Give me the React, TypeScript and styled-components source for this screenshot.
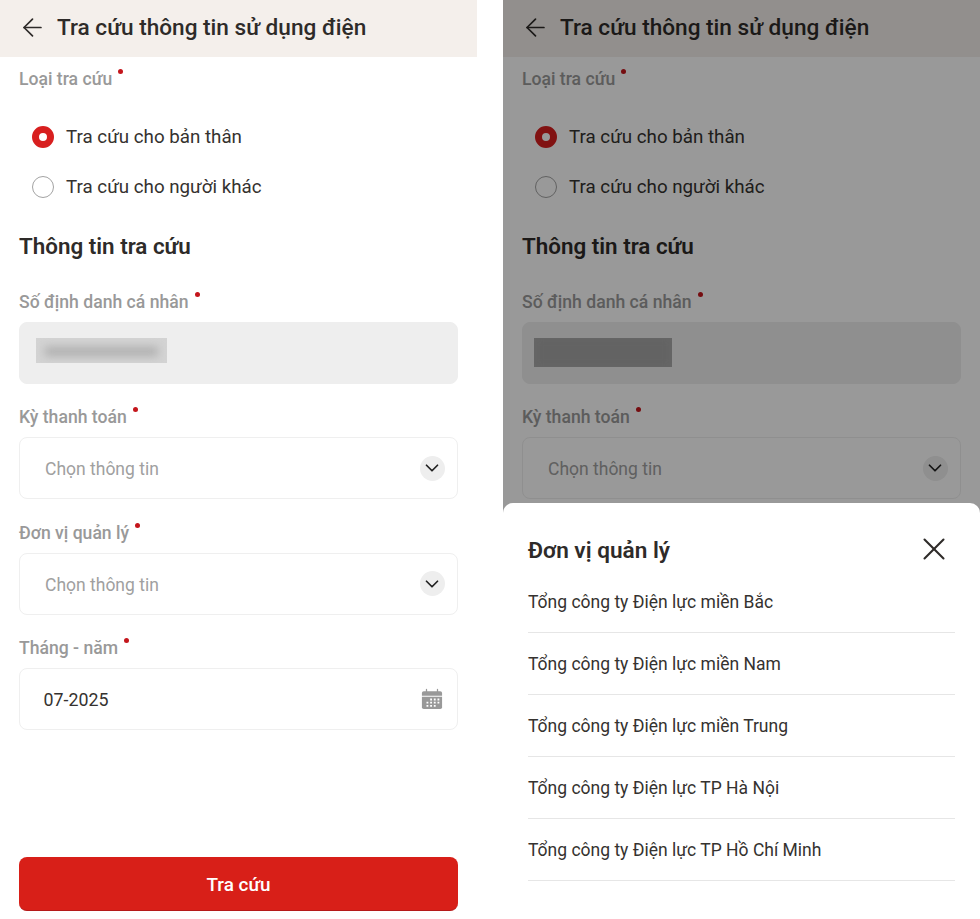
import React from "react";
import styled, { createGlobalStyle } from "styled-components";
import { ArrowLeft, ChevronDown, X } from "lucide-react";

const GlobalStyle = createGlobalStyle`
    html, body {
        margin: 0;
        padding: 0;
        background: #fff;
    }
    body {
        font-family: Roboto, "Liberation Sans", sans-serif;
    }
`;

const Page = styled.div`
    display: flex;
    justify-content: space-between;
    width: 980px;
    height: 919px;
    overflow: hidden;
`;

const Phone = styled.div`
    position: relative;
    display: flex;
    flex-direction: column;
    width: 477px;
    height: 919px;
    overflow: hidden;
    background: #fff;
`;

const Header = styled.header`
    display: flex;
    align-items: center;
    gap: 10px;
    height: 57px;
    padding: 0 0 2px 18px;
    box-sizing: border-box;
    flex: none;
    background: #f4efeb;
    color: #2e2b29;
`;

const Title = styled.h1`
    margin: 0;
    font-size: 22.6px;
    font-weight: 500;
    line-height: 28px;
`;

const Body = styled.main`
    display: flex;
    flex: 1;
    flex-direction: column;
    padding: 12px 19px 8px;
`;

const Label = styled.div`
    position: relative;
    width: max-content;
    padding-right: 11px;
    font-size: 17.6px;
    font-weight: 500;
    line-height: 20px;
    color: #999;

    &::after {
        content: "";
        position: absolute;
        top: 0;
        right: 0;
        width: 5px;
        height: 5px;
        border-radius: 50%;
        background: #c4161c;
    }
`;

const RadioGroup = styled.div`
    display: flex;
    flex-direction: column;
    gap: 28px;
    margin-top: 37px;
    padding-left: 12.5px;
`;

const RadioRow = styled.div`
    display: flex;
    align-items: center;
    gap: 12.5px;
    height: 22px;
    font-size: 18.75px;
    color: #35322f;
`;

const RadioMark = styled.span<{ $checked?: boolean }>`
    width: 22px;
    height: 22px;
    box-sizing: border-box;
    flex: none;
    border-radius: 50%;
    border: ${(p) => (p.$checked ? "7.5px solid #d81f1f" : "1.5px solid #a3a3a3")};
    background: #fff;
`;

const SectionTitle = styled.h2`
    margin: 34px 0 0;
    font-size: 22.4px;
    font-weight: 600;
    line-height: 28px;
    color: #2e2b29;
`;

const Field = styled.div<{ $gap: number }>`
    display: flex;
    flex-direction: column;
    gap: 10px;
    margin-top: ${(p) => p.$gap}px;
`;

const InputBox = styled.div<{ $disabled?: boolean }>`
    display: flex;
    align-items: center;
    justify-content: space-between;
    height: 62px;
    box-sizing: border-box;
    padding: 0 12.2px 0 25px;
    border-radius: 8px;
    font-size: 17.5px;
    color: #a0a0a0;
    background: ${(p) => (p.$disabled ? "#eeeeee" : "#fff")};
    border: 1.5px solid ${(p) => (p.$disabled ? "#eeeeee" : "#efefef")};
`;

const Placeholder = styled.span`
    margin-top: 1.5px;
`;

const DateValue = styled.span`
    margin-left: -1.5px;
    font-size: 17.8px;
    color: #35322f;
`;

const Masked = styled.div<{ $solid?: boolean }>`
    position: relative;
    overflow: hidden;
    margin-left: ${(p) => (p.$solid ? "-14px" : "-9px")};
    margin-top: ${(p) => (p.$solid ? "-1px" : "-6px")};
    width: ${(p) => (p.$solid ? 138 : 131)}px;
    height: ${(p) => (p.$solid ? 29 : 25)}px;
    background: ${(p) => (p.$solid ? "#aeaeae" : "#d3d3d3")};

    &::after {
        content: "";
        position: absolute;
        inset: ${(p) => (p.$solid ? "-2px 0" : "9px 9px 7px")};
        background: ${(p) => (p.$solid ? "#a6a6a6" : "#aeaeae")};
        filter: blur(4px);
    }
`;

const ChevronCircle = styled.span`
    display: flex;
    align-items: center;
    justify-content: center;
    width: 25px;
    height: 25px;
    border-radius: 50%;
    background: #eeeeee;
    color: #222;
`;

const CalendarSlot = styled.span`
    display: flex;
    margin-right: 1.5px;
`;

const SubmitButton = styled.button`
    height: 54px;
    width: 100%;
    margin-top: auto;
    padding: 2px 0 0;
    border: none;
    border-bottom: 1px solid #b51a1a;
    border-radius: 8px;
    font-family: inherit;
    font-size: 18.9px;
    font-weight: 500;
    color: #fff;
    background: #d81f18;
`;

const Scrim = styled.div`
    position: absolute;
    inset: 0;
    background: rgba(0, 0, 0, 0.4);
`;

const Sheet = styled.section`
    position: absolute;
    left: 0;
    right: 0;
    bottom: 0;
    height: 416px;
    box-sizing: border-box;
    padding: 34px 25px 0;
    border-radius: 10px 10px 0 0;
    background: #fff;
`;

const SheetHead = styled.div`
    display: flex;
    align-items: center;
    justify-content: space-between;
    height: 28px;
    margin-bottom: 6px;
    color: #2e2b29;
`;

const SheetTitle = styled.h3`
    margin: 0;
    font-size: 22.6px;
    font-weight: 600;
    line-height: 28px;
`;

const CloseSlot = styled.span`
    display: flex;
    margin-right: 2px;
    margin-top: -4px;
`;

const SheetItem = styled.div`
    display: flex;
    align-items: center;
    height: 62px;
    box-sizing: border-box;
    border-bottom: 1px solid #e6e6e6;
    font-size: 17.5px;
    color: #35322f;
`;

function CalendarIcon() {
    return (
        <svg width="22" height="22" viewBox="0 0 24 24" fill="none">
            <path d="M3 3.5h18a2 2 0 0 1 2 2v3H1v-3a2 2 0 0 1 2-2z" fill="#999" />
            <path d="M6 1.5v3M18 1.5v3" stroke="#999" strokeWidth="1.4" strokeLinecap="round" />
            <path d="M1 9.5h22V21a2 2 0 0 1-2 2H3a2 2 0 0 1-2-2z" fill="#999" />
            <path
                d="M10 11.5h2v2h-2zM14 11.5h2v2h-2zM18 11.5h2v2h-2zM6 15h2v2H6zM10 15h2v2h-2zM14 15h2v2h-2zM18 15h2v2h-2zM6 18.5h2v2H6zM10 18.5h2v2h-2zM14 18.5h2v2h-2z"
                fill="#fff"
            />
        </svg>
    );
}

function SelectField({ label }: { label: string }) {
    return (
        <Field $gap={23.4}>
            <Label>{label}</Label>
            <InputBox>
                <Placeholder>Chọn thông tin</Placeholder>
                <ChevronCircle>
                    <ChevronDown size={22} strokeWidth={1.9} />
                </ChevronCircle>
            </InputBox>
        </Field>
    );
}

// covered: the bottom sheet is open, so the lower fields are not drawn
function LookupForm({ covered }: { covered?: boolean }) {
    return (
        <>
            <Header>
                <ArrowLeft size={29} strokeWidth={1.4} />
                <Title>Tra cứu thông tin sử dụng điện</Title>
            </Header>
            <Body>
                <Label>Loại tra cứu</Label>
                <RadioGroup>
                    <RadioRow>
                        <RadioMark $checked />
                        Tra cứu cho bản thân
                    </RadioRow>
                    <RadioRow>
                        <RadioMark />
                        Tra cứu cho người khác
                    </RadioRow>
                </RadioGroup>
                <SectionTitle>Thông tin tra cứu</SectionTitle>
                <Field $gap={32}>
                    <Label>Số định danh cá nhân</Label>
                    <InputBox $disabled>
                        <Masked $solid={covered} />
                    </InputBox>
                </Field>
                <SelectField label="Kỳ thanh toán" />
                {!covered && (
                    <>
                        <SelectField label="Đơn vị quản lý" />
                        <Field $gap={23.4}>
                            <Label>Tháng - năm</Label>
                            <InputBox>
                                <DateValue>07-2025</DateValue>
                                <CalendarSlot>
                                    <CalendarIcon />
                                </CalendarSlot>
                            </InputBox>
                        </Field>
                        <SubmitButton>Tra cứu</SubmitButton>
                    </>
                )}
            </Body>
        </>
    );
}

const units = [
    "Tổng công ty Điện lực miền Bắc",
    "Tổng công ty Điện lực miền Nam",
    "Tổng công ty Điện lực miền Trung",
    "Tổng công ty Điện lực TP Hà Nội",
    "Tổng công ty Điện lực TP Hồ Chí Minh",
];

export default function App() {
    return (
        <Page>
            <GlobalStyle />
            <Phone>
                <LookupForm />
            </Phone>
            <Phone>
                <LookupForm covered />
                <Scrim />
                <Sheet>
                    <SheetHead>
                        <SheetTitle>Đơn vị quản lý</SheetTitle>
                        <CloseSlot>
                            <X size={38} strokeWidth={1.3} />
                        </CloseSlot>
                    </SheetHead>
                    {units.map((u) => (
                        <SheetItem key={u}>{u}</SheetItem>
                    ))}
                </Sheet>
            </Phone>
        </Page>
    );
}
